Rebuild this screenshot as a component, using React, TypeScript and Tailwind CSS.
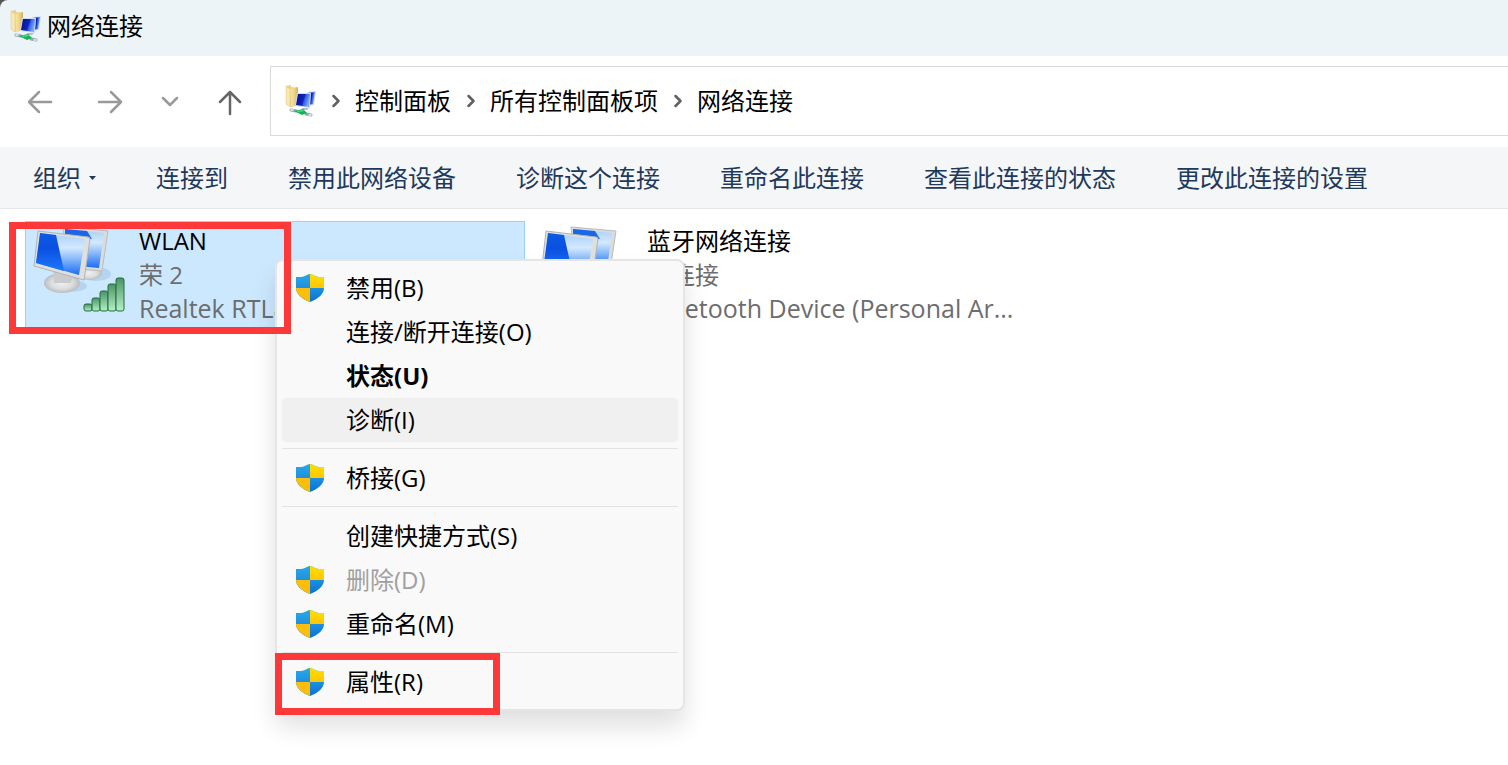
import React from "react";
import { ChevronRight } from "lucide-react";

type MenuEntry = {
    label: string;
    shield?: boolean;
    bold?: boolean;
    disabled?: boolean;
    hover?: boolean;
};

type Connection = {
    name: string;
    status: string;
    device: string;
    selected?: boolean;
    signal?: boolean;
};

const commands = [
    "连接到",
    "禁用此网络设备",
    "诊断这个连接",
    "重命名此连接",
    "查看此连接的状态",
    "更改此连接的设置",
];

const crumbs = ["控制面板", "所有控制面板项", "网络连接"];

const connections: Connection[] = [
    {
        name: "WLAN",
        status: "荣 2",
        device: "Realtek RTL8",
        selected: true,
        signal: true,
    },
    {
        name: "蓝牙网络连接",
        status: "未连接",
        device: "Bluetooth Device (Personal Ar...",
    },
];

const menuGroups: MenuEntry[][] = [
    [
        { label: "禁用(B)", shield: true },
        { label: "连接/断开连接(O)" },
        { label: "状态(U)", bold: true },
        { label: "诊断(I)", hover: true },
    ],
    [{ label: "桥接(G)", shield: true }],
    [
        { label: "创建快捷方式(S)" },
        { label: "删除(D)", shield: true, disabled: true },
        { label: "重命名(M)", shield: true },
    ],
    [{ label: "属性(R)", shield: true }],
];

const navButtons = [
    { label: "后退", path: "M27 16H5M15 6L5 16l10 10", color: "text-[#999999]" },
    { label: "前进", path: "M5 16h22M17 6l10 10-10 10", color: "text-[#999999]" },
    { label: "最近位置", path: "M9 12l7 7 7-7", color: "text-[#999999]" },
    { label: "上移", path: "M16 28V6M6 16L16 6l10 10", color: "text-[#666666]" },
];

const FolderNetworkIcon = () => (
    <svg viewBox="0 0 32 32" className="h-8 w-8 shrink-0" aria-hidden="true">
        <defs>
            <linearGradient id="folder" x1="0" y1="0" x2="1" y2="0">
                <stop offset="0" stopColor="#f8e6a6" />
                <stop offset="0.5" stopColor="#efd68a" />
                <stop offset="1" stopColor="#d3b056" />
            </linearGradient>
            <linearGradient id="mini" x1="0" y1="0" x2="1" y2="0.3">
                <stop offset="0" stopColor="#060c90" />
                <stop offset="0.6" stopColor="#0f26bc" />
                <stop offset="0.7" stopColor="#3462e4" />
                <stop offset="1" stopColor="#7ba6f6" />
            </linearGradient>
        </defs>
        <path d="M2 1l5-1v2l7 1v17l-7 2-5-3z" fill="#e9d088" />
        <path d="M6 4l8-2v18l-7 2z" fill="url(#folder)" />
        <path d="M2 1l4 3v18l-4-3z" fill="#f8e9b4" stroke="#dcc175" strokeWidth="0.5" />
        <path d="M23 7l9-1-2 14-6 1z" fill="#cfdcf2" />
        <path d="M24 8l7-1-2 12-5 1z" fill="url(#mini)" />
        <path d="M13 8l14 0-1 15-15-2z" fill="#d3dcec" />
        <path d="M14 9l12 0-1 13-13-2z" fill="url(#mini)" />
        <path d="M18 23l7 0-2 2h-5z" fill="#b4bec8" />
        <path d="M7 25l5 1M22 29l5 1" stroke="#94a6ae" strokeWidth="3" strokeLinecap="round" />
        <path d="M7 25h2M25 30h2" stroke="#eef3f5" strokeWidth="1.5" strokeLinecap="round" />
        <path d="M10 26l9-2 4 4-5 2z" fill="#12b454" />
        <path d="M13 26l6-1 1 1-6 1z" fill="#5ee08f" />
    </svg>
);

const ShieldIcon = () => (
    <svg viewBox="0 0 28 28" className="h-7 w-7" aria-hidden="true">
        <defs>
            <linearGradient id="shieldBlue" x1="0" y1="0" x2="0" y2="1">
                <stop offset="0" stopColor="#2ba8e8" />
                <stop offset="0.5" stopColor="#1d90df" />
                <stop offset="1" stopColor="#0a72d0" />
            </linearGradient>
            <linearGradient id="shieldYellow" x1="0" y1="0" x2="0" y2="1">
                <stop offset="0" stopColor="#ffdf00" />
                <stop offset="1" stopColor="#ffc505" />
            </linearGradient>
        </defs>
        <path d="M14 0c3 0 5 3 9 3h5v11c0 6-6 11-14 14C6 25 0 20 0 14V3h5c4 0 6-3 9-3z" fill="url(#shieldBlue)" />
        <path d="M14 0c3 0 5 3 9 3h5v11H14z" fill="url(#shieldYellow)" />
        <path d="M14 14v14C6 25 0 20 0 14z" fill="#fdbd0a" />
    </svg>
);

const signalBars = [8, 14, 21, 28, 34];

const ComputersIcon = ({ signal }: { signal?: boolean }) => (
    <svg viewBox="0 0 96 96" className="h-24 w-24" aria-hidden="true">
        <defs>
            <linearGradient id="screenDark" x1="0" y1="0" x2="0" y2="1">
                <stop offset="0" stopColor="#0c5ce4" />
                <stop offset="0.4" stopColor="#0a50e0" />
                <stop offset="1" stopColor="#1c78ff" />
            </linearGradient>
            <linearGradient id="screenLight" x1="0" y1="0" x2="0" y2="1">
                <stop offset="0" stopColor="#a9cef8" />
                <stop offset="0.35" stopColor="#d3e9fe" />
                <stop offset="0.6" stopColor="#8dbcfa" />
                <stop offset="1" stopColor="#1a6cf4" />
            </linearGradient>
            <linearGradient id="bar" x1="0" y1="0" x2="0" y2="1">
                <stop offset="0" stopColor="#4a9464" />
                <stop offset="1" stopColor="#b4f0c6" />
            </linearGradient>
            <radialGradient id="stand">
                <stop offset="0" stopColor="#f0f0f0" />
                <stop offset="0.6" stopColor="#dcdddd" />
                <stop offset="1" stopColor="#b9bcbf" />
            </radialGradient>
        </defs>
        <ellipse cx="66" cy="50" rx="15" ry="7" fill="#7fa6c9" opacity="0.3" />
        <ellipse cx="59" cy="49" rx="13" ry="7" fill="url(#stand)" />
        <path d="M33 3l45 4-6 40-34-3z" fill="#d9dbdc" stroke="#b9bdc0" strokeLinejoin="round" />
        <path d="M35 5l39 4-5 35-31-3z" fill="url(#screenLight)" />
        <path d="M35 5l22 2 5 8-27-2z" fill="#1a66e6" />
        <ellipse cx="40" cy="62" rx="17" ry="6" fill="#7fa6c9" opacity="0.3" />
        <ellipse cx="32" cy="59" rx="18" ry="10" fill="url(#stand)" />
        <path d="M23 44l20 5-2 10H24z" fill="#c9cbcd" />
        <path d="M8 7l50 6q2 0 2 2l-6 41L4 42z" fill="#dedfdf" stroke="#b0b4b7" strokeLinejoin="round" />
        <path d="M10 9l45 6-6 36L6 39z" fill="url(#screenLight)" />
        <path d="M10 9l16 2 8 36L6 39z" fill="url(#screenDark)" />
        {signal &&
            signalBars.map((height, i) => (
                <rect
                    key={height}
                    x={54 + i * 8}
                    y={88 - height}
                    width={8}
                    height={height - 1}
                    rx={2}
                    fill="url(#bar)"
                    stroke="#256b40"
                />
            ))}
    </svg>
);

const ContextMenu = () => (
    <div
        role="menu"
        className="absolute left-[275px] top-[50px] w-[410px] rounded-lg border-2 border-[#e5e5e5] bg-[#f9f9f9] p-[5px] shadow-[0_16px_24px_rgba(0,0,0,0.12)]"
    >
        {menuGroups.map((group, index) => (
            <div key={index}>
                {index > 0 && <hr className="mt-1.5 mb-[7px] border-[#e2e2e2]" />}
                {group.map((entry) => (
                    <button
                        key={entry.label}
                        role="menuitem"
                        disabled={entry.disabled}
                        className={`flex h-11 w-full items-center rounded pl-3.5 text-left ${entry.bold ? "font-bold" : ""} ${entry.disabled ? "text-[#a0a0a0]" : "text-black"} ${entry.hover ? "bg-[#f0f0f0]" : ""}`}
                    >
                        <span className="w-[50px]">{entry.shield && <ShieldIcon />}</span>
                        {entry.label}
                    </button>
                ))}
            </div>
        ))}
    </div>
);

const App = () => (
    <div className="min-h-screen overflow-hidden bg-white font-['Open_Sans','Noto_Sans_CJK_SC',sans-serif] text-2xl text-black">
        <div className="bg-[#555555]">
            <header className="flex h-14 items-center gap-1.5 rounded-tl-lg bg-[#ecf4f8] pb-1 pl-[9px]">
                <FolderNetworkIcon />
                <h1>网络连接</h1>
            </header>
        </div>

        <div className="flex h-[91px] items-start">
            <div className="flex h-[91px] w-[270px] shrink-0 items-center pl-6">
                {navButtons.map((button, index) => (
                    <button
                        key={button.label}
                        aria-label={button.label}
                        className={`${button.color} ${index === 0 ? "mr-[38px]" : "mr-7"}`}
                    >
                        <svg
                            viewBox="0 0 32 32"
                            className="h-8 w-8"
                            fill="none"
                            stroke="currentColor"
                            strokeWidth="2.5"
                            strokeLinecap="round"
                            strokeLinejoin="round"
                            aria-hidden="true"
                        >
                            <path d={button.path} />
                        </svg>
                    </button>
                ))}
            </div>
            <nav className="mt-2.5 flex h-[70px] flex-1 items-center border border-r-0 border-[#d9d9d9] pl-[13px]">
                <FolderNetworkIcon />
                {crumbs.map((crumb) => (
                    <React.Fragment key={crumb}>
                        <span className="flex w-[39px] justify-center text-[#606060]">
                            <ChevronRight size={20} strokeWidth={3} />
                        </span>
                        <a href="#">{crumb}</a>
                    </React.Fragment>
                ))}
            </nav>
        </div>

        <div className="flex h-[62px] items-center gap-[60px] border-b border-[#e5e7ea] bg-[#f4f6f8] pl-[33px] whitespace-nowrap text-[#1e395b]">
            <button className="flex items-center gap-2">
                组织
                <svg viewBox="0 0 7 4" className="h-1 w-[7px]" aria-hidden="true">
                    <path d="M0 0h7L3.500 4z" fill="currentColor" />
                </svg>
            </button>
            {commands.map((command) => (
                <button key={command}>{command}</button>
            ))}
        </div>

        <main className="relative flex gap-2 px-[25px] pt-3">
            {connections.map((item) => (
                <div
                    key={item.name}
                    className={`flex w-[500px] shrink-0 border pt-0.5 pb-1 pl-1 ${item.selected ? "border-[#99d1ff] bg-[#cce8ff]" : "border-transparent"}`}
                >
                    <ComputersIcon signal={item.signal} />
                    <div className="ml-[13px] min-w-0 flex-1 leading-[34px] text-[#6d6d6d]">
                        <p className="text-black">{item.name}</p>
                        <p>{item.status}</p>
                        <p className="text-[25px] leading-8 whitespace-nowrap">{item.device}</p>
                    </div>
                </div>
            ))}
            <ContextMenu />
            <div className="pointer-events-none absolute left-[9px] top-[13px] h-28 w-[282px] border-[7px] border-[#fd3838]" />
            <div className="pointer-events-none absolute left-[275px] top-[444px] h-[62px] w-[225px] border-[7px] border-[#fd3838]" />
        </main>
    </div>
);

export default App;
